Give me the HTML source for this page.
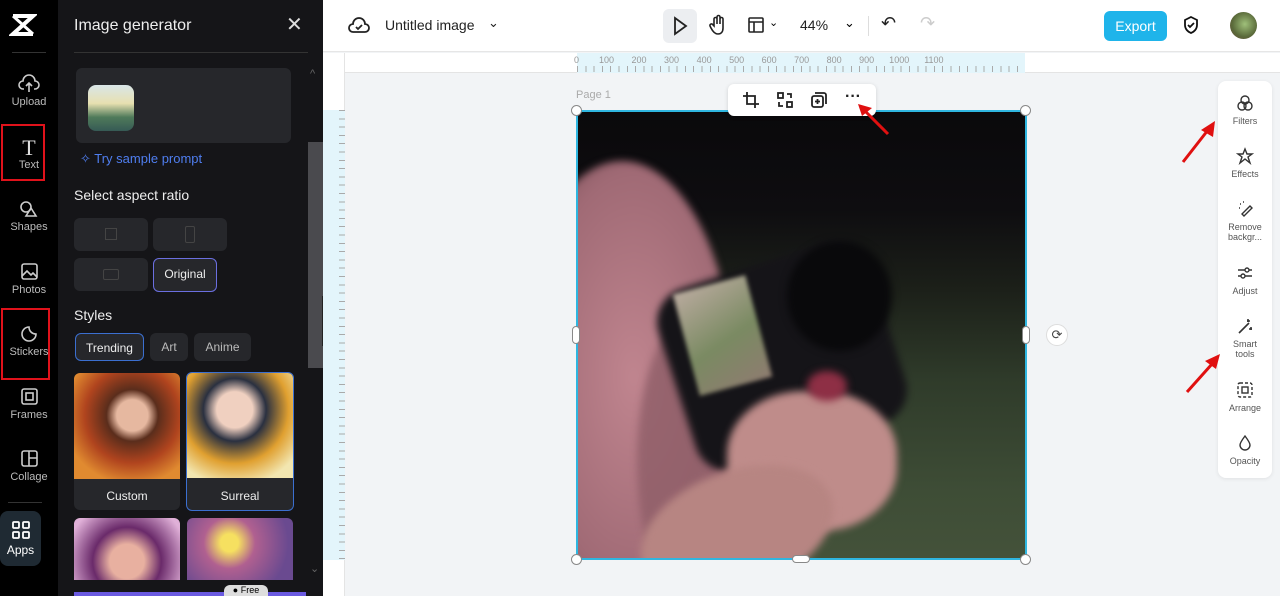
<!DOCTYPE html>
<html><head><meta charset="utf-8"><style>
*{box-sizing:border-box;margin:0;padding:0}
html,body{width:1280px;height:596px;overflow:hidden}
body{font-family:"Liberation Sans",sans-serif;background:#f2f4f6;position:relative}
.abs{position:absolute}
#nav{left:0;top:0;width:58px;height:596px;background:#000}
.ni{position:absolute;left:0;width:58px;text-align:center;color:#bbb;font-size:11px}
.ni svg{display:block;margin:0 auto 2px}
#panel{left:58px;top:0;width:265px;height:596px;background:#151518;overflow:hidden}
.wt{color:#eee}
.box{position:absolute;background:#26272b;border-radius:6px}
.tag{position:absolute;top:333px;height:28px;background:#26272b;border-radius:6px;color:#bbb;font-size:12px;line-height:28px;text-align:center}
#top{left:323px;top:0;width:957px;height:52px;background:#fff;border-bottom:1px solid #e6e6e6}
.red{position:absolute;border:2px solid #e0121b}
.rt{position:absolute;left:1218px;width:54px;text-align:center;font-size:9px;color:#555;line-height:10px}
.rt svg{display:block;margin:0 auto 4px}
.ph{position:absolute;filter:blur(4px)}
</style></head><body>
<div id="nav" class="abs">
  <svg class="abs" style="left:9px;top:13px" width="28" height="24" viewBox="0 0 28 24"><path d="M4 3h20L4 21h20" stroke="#fff" stroke-width="4" fill="none"/><path d="M4 3l20 18M24 3L4 21" stroke="#fff" stroke-width="3"/></svg>
  <div class="abs" style="left:12px;top:52px;width:34px;height:1px;background:#333"></div>
  <div class="ni" style="top:74px"><svg width="22" height="20" viewBox="0 0 22 20" fill="none" stroke="#ccc" stroke-width="1.6"><path d="M6 15H5a4 4 0 010-8 6 6 0 0112 0 4 4 0 010 8h-1M11 18v-8M8 12l3-3 3 3"/></svg>Upload</div>
  <div class="ni" style="top:137px"><div style="font-family:'Liberation Serif';font-size:22px;color:#ddd;line-height:22px">T</div>Text</div>
  <div class="ni" style="top:199px"><svg width="22" height="20" viewBox="0 0 22 20" fill="none" stroke="#ccc" stroke-width="1.6"><circle cx="8" cy="8" r="5"/><path d="M13 9l5 8H8z"/></svg>Shapes</div>
  <div class="ni" style="top:262px"><svg width="22" height="20" viewBox="0 0 22 20" fill="none" stroke="#ccc" stroke-width="1.6"><rect x="4" y="2" width="15" height="15" rx="2"/><path d="M4 14l5-5 4 4 2-2 4 4"/></svg>Photos</div>
  <div class="ni" style="top:324px"><svg width="22" height="20" viewBox="0 0 22 20" fill="none" stroke="#ccc" stroke-width="1.6"><path d="M18 10a7 7 0 11-7-7c0 4 3 7 7 7z"/></svg>Stickers</div>
  <div class="ni" style="top:387px"><svg width="22" height="20" viewBox="0 0 22 20" fill="none" stroke="#ccc" stroke-width="1.6"><rect x="4" y="2" width="15" height="15" rx="2"/><rect x="8" y="6" width="7" height="7"/></svg>Frames</div>
  <div class="ni" style="top:449px"><svg width="22" height="20" viewBox="0 0 22 20" fill="none" stroke="#ccc" stroke-width="1.6"><rect x="4" y="2" width="15" height="15" rx="2"/><path d="M11 2v15M11 9h8"/></svg>Collage</div>
  <div class="abs" style="left:8px;top:502px;width:34px;height:1px;background:#333"></div>
  <div class="abs" style="left:0;top:511px;width:41px;height:55px;background:#1f2a33;border-radius:8px;color:#fff;font-size:12px;text-align:center;padding-top:9px"><svg width="20" height="20" viewBox="0 0 20 20" fill="none" stroke="#fff" stroke-width="1.8" style="display:block;margin:0 auto 3px"><rect x="2" y="2" width="6" height="6" rx="1"/><rect x="12" y="2" width="6" height="6" rx="1"/><rect x="2" y="12" width="6" height="6" rx="1"/><rect x="12" y="12" width="6" height="6" rx="1"/></svg>Apps</div>
  <div class="red" style="left:1px;top:124px;width:44px;height:57px"></div>
  <div class="red" style="left:1px;top:308px;width:49px;height:72px"></div>
</div>
<div id="panel" class="abs">
  <div class="abs wt" style="left:16px;top:17px;font-size:16px">Image generator</div>
  <div class="abs" style="left:228px;top:12px;color:#ddd;font-size:20px">✕</div>
  <div class="abs" style="left:16px;top:52px;width:234px;height:1px;background:#333"></div>
  <div class="box" style="left:18px;top:68px;width:215px;height:75px"></div>
  <div class="abs" style="left:30px;top:85px;width:46px;height:46px;border-radius:8px;background:linear-gradient(#d9e6e8 0%,#e7e0b0 40%,#4f7a5a 70%,#365a55 100%)"></div>
  <div class="abs" style="left:22px;top:151px;color:#4f7ef0;font-size:13px">✧ Try sample prompt</div>
  <div class="abs wt" style="left:16px;top:187px;font-size:14px">Select aspect ratio</div>
  <div class="box" style="left:16px;top:218px;width:74px;height:33px"><div style="margin:10px auto;width:12px;height:12px;border:1px solid #444"></div></div>
  <div class="box" style="left:95px;top:218px;width:74px;height:33px"><div style="margin:8px auto;width:10px;height:17px;border:1px solid #444;border-radius:2px"></div></div>
  <div class="box" style="left:16px;top:258px;width:74px;height:33px"><div style="margin:11px auto;width:16px;height:11px;border:1px solid #444;border-radius:2px"></div></div>
  <div class="box" style="left:95px;top:258px;width:64px;height:34px;border:1.5px solid #6b6fe0;color:#eee;font-size:12px;line-height:31px;text-align:center">Original</div>
  <div class="abs wt" style="left:16px;top:307px;font-size:14px">Styles</div>
  <div class="tag" style="left:17px;width:69px;border:1.5px solid #3b6fd0;color:#eee">Trending</div>
  <div class="tag" style="left:92px;width:38px">Art</div>
  <div class="tag" style="left:136px;width:57px">Anime</div>
  <div class="box" style="left:16px;top:373px;width:106px;height:137px;overflow:hidden"><div style="height:106px;background:radial-gradient(circle at 55% 40%,#e6b8a0 0 18%,#5a2d1c 30%,#b0441e 55%,#e08a30 80%)"></div><div style="color:#eee;font-size:12px;text-align:center;margin-top:10px">Custom</div></div>
  <div class="box" style="left:128px;top:372px;width:108px;height:139px;border:1.5px solid #3b6fd0;overflow:hidden"><div style="height:105px;background:radial-gradient(circle at 45% 35%,#f0d0c0 0 20%,#2a3040 35%,#e0a030 60%,#f2e6b0 85%)"></div><div style="color:#eee;font-size:12px;text-align:center;margin-top:11px">Surreal</div></div>
  <div class="abs" style="left:16px;top:518px;width:106px;height:62px;border-radius:6px 6px 0 0;background:radial-gradient(circle at 50% 70%,#e8b0a0 0 25%,#6a2a6a 50%,#e0b0d8 90%)"></div>
  <div class="abs" style="left:129px;top:518px;width:106px;height:62px;border-radius:6px 6px 0 0;background:radial-gradient(circle at 40% 40%,#f6e060 0 12%,#b06090 35%,#6a4a90 80%)"></div>
  <div class="abs" style="left:16px;top:592px;width:232px;height:4px;background:#6a5ae0"></div>
  <div class="abs" style="left:166px;top:585px;width:44px;height:11px;border-radius:6px 6px 0 0;background:#ddd;font-size:9px;line-height:11px;color:#000;text-align:center">● Free</div>
  <div class="abs" style="left:250px;top:142px;width:15px;height:226px;background:#4a4a4e"></div>
  <div class="abs" style="left:252px;top:68px;color:#666;font-size:11px">^</div>
  <div class="abs" style="left:252px;top:562px;color:#666;font-size:11px">⌄</div>
</div>
<div class="abs" style="left:322px;top:296px;width:10px;height:50px;background:#222;border-radius:0 8px 8px 0"></div>
<div id="top" class="abs">
  <svg class="abs" style="left:25px;top:16px" width="22" height="20" viewBox="0 0 22 20" fill="none" stroke="#222" stroke-width="1.8"><path d="M6 16H5a4 4 0 010-8 6 6 0 0112 0 4 4 0 010 8H6zM8 11l2 2 4-4"/></svg>
  <div class="abs" style="left:62px;top:17px;font-size:14px;color:#222">Untitled image</div>
  <div class="abs" style="left:165px;top:15px;font-size:13px;color:#222">⌄</div>
  <div class="abs" style="left:340px;top:9px;width:34px;height:34px;background:#eceef1;border-radius:6px"></div>
  <svg class="abs" style="left:349px;top:16px" width="16" height="20" viewBox="0 0 16 20" fill="none" stroke="#222" stroke-width="1.8"><path d="M3 2l11 8-11 8z"/></svg>
  <svg class="abs" style="left:385px;top:14px" width="20" height="22" viewBox="0 0 20 22" fill="none" stroke="#222" stroke-width="1.6"><path d="M6 12V5a1.5 1.5 0 013 0v5V3a1.5 1.5 0 013 0v7V5a1.5 1.5 0 013 0v9c0 4-2 6-5 6s-5-2-7-6l-1-2a1.5 1.5 0 013-1z"/></svg>
  <svg class="abs" style="left:424px;top:16px" width="18" height="18" viewBox="0 0 18 18" fill="none" stroke="#222" stroke-width="1.6"><rect x="2" y="2" width="14" height="14" rx="1"/><path d="M2 6h14M7 6v10"/></svg>
  <div class="abs" style="left:446px;top:16px;font-size:11px">⌄</div>
  <div class="abs" style="left:477px;top:17px;font-size:14px;color:#222">44%</div>
  <div class="abs" style="left:521px;top:15px;font-size:13px">⌄</div>
  <div class="abs" style="left:545px;top:16px;width:1px;height:20px;background:#ddd"></div>
  <div class="abs" style="left:558px;top:13px;font-size:18px;color:#222">↶</div>
  <div class="abs" style="left:597px;top:13px;font-size:18px;color:#ccc">↷</div>
  <div class="abs" style="left:781px;top:11px;width:63px;height:30px;background:#1fb4ea;border-radius:6px;color:#fff;font-size:14px;line-height:30px;text-align:center">Export</div>
  <svg class="abs" style="left:859px;top:15px" width="18" height="20" viewBox="0 0 18 20" fill="none" stroke="#111" stroke-width="1.8"><path d="M9 2l6 3v5c0 4-3 7-6 8-3-1-6-4-6-8V5zM6 10l2 2 4-4"/></svg>
  <div class="abs" style="left:907px;top:12px;width:27px;height:27px;border-radius:50%;background:radial-gradient(circle at 55% 45%,#9fc07a,#5a6a3a 60%,#6a4a3a)"></div>
</div>
<div class="abs" style="left:323px;top:53px;width:957px;height:20px;background:#fff;border-bottom:1px solid #e4e4e4"></div>
<div class="abs" style="left:577px;top:53px;width:448px;height:20px;background:#e3f5fb"></div>
<div class="abs" style="left:577px;top:66px;width:448px;height:6px;background:repeating-linear-gradient(90deg,#aaa 0 1px,transparent 1px 8.3px)"></div>
<div class="abs" style="left:323px;top:53px;width:22px;height:543px;background:#fff;border-right:1px solid #e4e4e4"></div>
<div class="abs" style="left:323px;top:110px;width:22px;height:450px;background:#e3f5fb"></div>
<div class="abs" style="left:339px;top:110px;width:6px;height:450px;background:repeating-linear-gradient(180deg,#aaa 0 1px,transparent 1px 8.3px)"></div>
<div class="abs" style="left:574px;top:55px;font-size:9px;color:#999;white-space:pre">0        100       200       300       400       500       600       700       800       900      1000      1100</div>
<div class="abs" style="left:576px;top:89px;font-size:11px;color:#aaa">Page 1</div>
<div class="abs" style="left:577px;top:111px;width:449px;height:448px;overflow:hidden;background:linear-gradient(180deg,#0a090b 0%,#0e0d10 22%,#1c2019 40%,#2f3b2a 60%,#3e4d36 85%,#44523a 100%)">
  <div class="ph" style="left:-70px;top:50px;width:230px;height:480px;border-radius:50%;background:radial-gradient(ellipse at 55% 45%,#c0858f,#a06a75 55%,#4a2e35 95%)"></div>
  <div class="ph" style="left:60px;top:200px;width:120px;height:300px;border-radius:50%;background:#8f5e68;opacity:.8"></div>
  <div class="ph" style="left:95px;top:150px;width:220px;height:190px;background:#151418;border-radius:35px;transform:rotate(-18deg)"></div>
  <div class="ph" style="left:210px;top:130px;width:105px;height:110px;border-radius:50%;background:#09090b"></div>
  <div class="ph" style="left:108px;top:172px;width:75px;height:105px;background:linear-gradient(160deg,#b9aa9e,#7a8a62 55%,#8e7c70);transform:rotate(-15deg);filter:blur(2px)"></div>
  <div class="ph" style="left:150px;top:280px;width:170px;height:140px;border-radius:45%;background:#bf8c8a"></div>
  <div class="ph" style="left:60px;top:360px;width:200px;height:120px;border-radius:50%;background:#b78582;transform:rotate(-20deg)"></div>
  <div class="ph" style="left:230px;top:260px;width:40px;height:30px;border-radius:50%;background:#8e2f45"></div>
</div>
<div class="abs" style="left:576px;top:110px;width:451px;height:450px;border:2px solid #2fb6e0"></div>
<div class="abs" style="left:571px;top:105px;width:11px;height:11px;border-radius:50%;background:#fff;border:1px solid #888"></div>
<div class="abs" style="left:1020px;top:105px;width:11px;height:11px;border-radius:50%;background:#fff;border:1px solid #888"></div>
<div class="abs" style="left:571px;top:554px;width:11px;height:11px;border-radius:50%;background:#fff;border:1px solid #888"></div>
<div class="abs" style="left:1020px;top:554px;width:11px;height:11px;border-radius:50%;background:#fff;border:1px solid #888"></div>
<div class="abs" style="left:572px;top:326px;width:8px;height:18px;border-radius:4px;background:#fff;border:1px solid #888"></div>
<div class="abs" style="left:1022px;top:326px;width:8px;height:18px;border-radius:4px;background:#fff;border:1px solid #888"></div>
<div class="abs" style="left:792px;top:555px;width:18px;height:8px;border-radius:4px;background:#fff;border:1px solid #888"></div>
<div class="abs" style="left:1046px;top:324px;width:22px;height:22px;border-radius:50%;background:#fff;border:1px solid #ddd;text-align:center;font-size:13px;line-height:20px;color:#444">⟳</div>
<div class="abs" style="left:728px;top:84px;width:148px;height:32px;background:#fff;border-radius:6px;box-shadow:0 1px 4px rgba(0,0,0,.15)"></div>
<svg class="abs" style="left:742px;top:91px" width="18" height="18" viewBox="0 0 18 18" fill="none" stroke="#222" stroke-width="1.8"><path d="M5 1v12h12M1 5h12v12"/></svg>
<svg class="abs" style="left:776px;top:91px" width="18" height="18" viewBox="0 0 18 18" fill="none" stroke="#222" stroke-width="1.8"><rect x="2" y="2" width="5" height="5"/><rect x="11" y="11" width="5" height="5"/><path d="M11 3h4v4M7 15H3v-4"/></svg>
<svg class="abs" style="left:810px;top:91px" width="18" height="18" viewBox="0 0 18 18" fill="none" stroke="#222" stroke-width="1.8"><rect x="2" y="5" width="11" height="11" rx="2"/><path d="M5 2h9a2 2 0 012 2v9M7.5 8v5M5 10.5h5"/></svg>
<div class="abs" style="left:845px;top:88px;font-size:16px;font-weight:bold;color:#222">···</div>
<svg class="abs" style="left:850px;top:100px" width="45" height="40" viewBox="0 0 45 40"><path d="M38 34L14 10" stroke="#e01010" stroke-width="3"/><path d="M8 4l14 4-10 8z" fill="#e01010"/></svg>
<div class="abs" style="left:1218px;top:81px;width:54px;height:397px;background:#fff;border-radius:8px;box-shadow:0 1px 4px rgba(0,0,0,.08)"></div>
<div class="rt" style="top:94px"><svg width="18" height="18" viewBox="0 0 18 18" fill="none" stroke="#333" stroke-width="1.4"><circle cx="9" cy="6" r="4"/><circle cx="6" cy="12" r="4"/><circle cx="12" cy="12" r="4"/></svg>Filters</div>
<div class="rt" style="top:147px"><svg width="18" height="18" viewBox="0 0 18 18" fill="none" stroke="#333" stroke-width="1.4"><path d="M9 2l2 5h5l-4 3 2 6-5-4-5 4 2-6-4-3h5z"/></svg>Effects</div>
<div class="rt" style="top:200px"><svg width="18" height="18" viewBox="0 0 18 18" fill="none" stroke="#333" stroke-width="1.4"><path d="M6 14l8-8 2 2-8 8zM4 4h1M3 8h1M7 2h1"/></svg>Remove<br>backgr...</div>
<div class="rt" style="top:264px"><svg width="18" height="18" viewBox="0 0 18 18" fill="none" stroke="#333" stroke-width="1.4"><path d="M2 6h14M2 12h14"/><circle cx="11" cy="6" r="2" fill="#fff"/><circle cx="7" cy="12" r="2" fill="#fff"/></svg>Adjust</div>
<div class="rt" style="top:317px"><svg width="18" height="18" viewBox="0 0 18 18" fill="none" stroke="#333" stroke-width="1.6"><path d="M3 16L13 6M12 2v3M14 4h-3M15 10v3M16 12h-3"/></svg>Smart<br>tools</div>
<div class="rt" style="top:381px"><svg width="18" height="18" viewBox="0 0 18 18" fill="none" stroke="#333" stroke-width="1.4" stroke-dasharray="3 2"><rect x="2" y="2" width="14" height="14" rx="2"/><rect x="6" y="6" width="6" height="6" stroke-dasharray="none"/></svg>Arrange</div>
<div class="rt" style="top:434px"><svg width="18" height="18" viewBox="0 0 18 18" fill="none" stroke="#333" stroke-width="1.4"><path d="M9 2c3 4 5 7 5 9a5 5 0 01-10 0c0-2 2-5 5-9z"/></svg>Opacity</div>
<svg class="abs" style="left:1180px;top:118px" width="40" height="48" viewBox="0 0 40 48"><path d="M3 44L28 12" stroke="#e01010" stroke-width="3"/><path d="M35 3l-2 16-12-7z" fill="#e01010"/></svg>
<svg class="abs" style="left:1184px;top:350px" width="40" height="45" viewBox="0 0 40 45"><path d="M3 42L28 14" stroke="#e01010" stroke-width="3"/><path d="M36 4l-4 15-11-8z" fill="#e01010"/></svg>
</body></html>
